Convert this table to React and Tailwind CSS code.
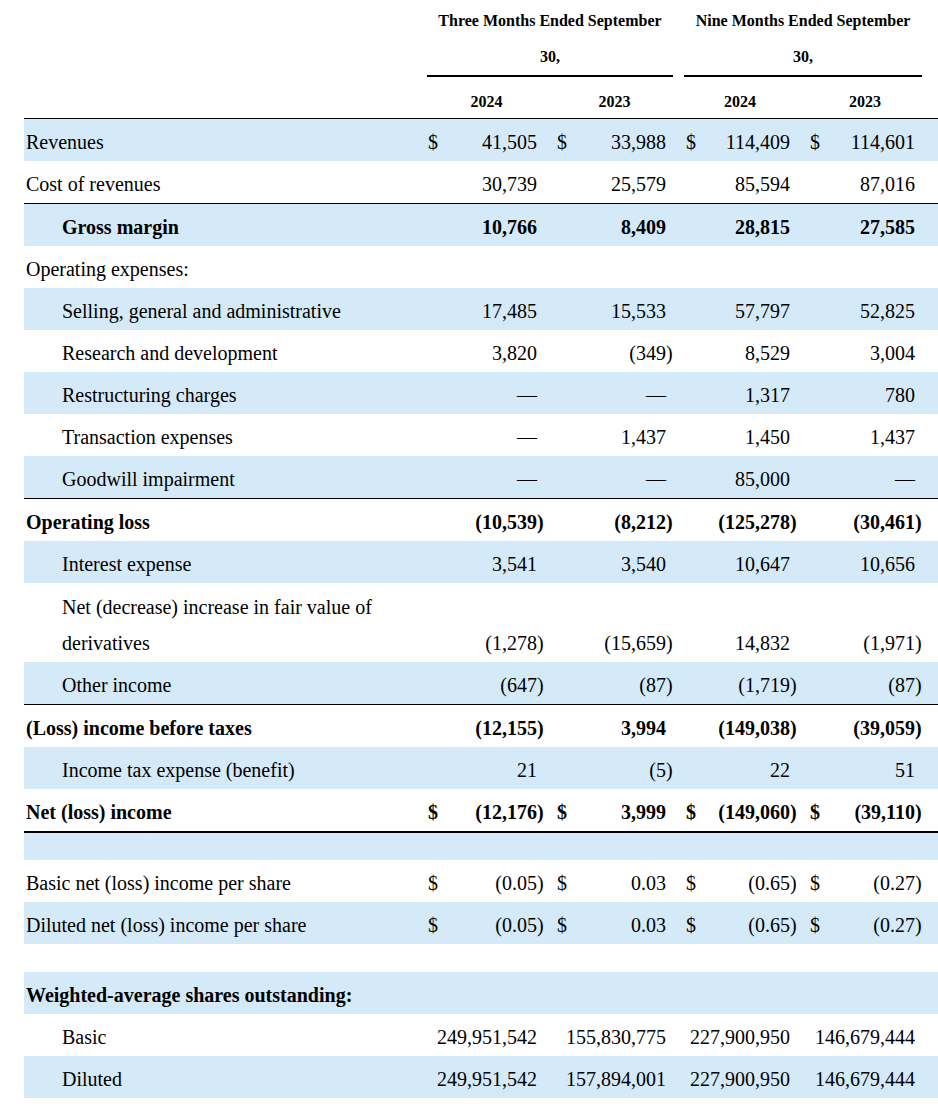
const cols = "grid grid-cols-[403px_18px_92px_19px_18px_92px_7px_11px_18px_88px_18px_18px_89px_7px]";

const rows = [
  { label: "Revenues", blue: true, dollar: true, vals: ["41,505", "33,988", "114,409", "114,601"] },
  { label: "Cost of revenues", line: "thin", vals: ["30,739", "25,579", "85,594", "87,016"] },
  { label: "Gross margin", indent: true, bold: true, blue: true, vals: ["10,766", "8,409", "28,815", "27,585"] },
  { label: "Operating expenses:", vals: ["", "", "", ""] },
  { label: "Selling, general and administrative", indent: true, blue: true, vals: ["17,485", "15,533", "57,797", "52,825"] },
  { label: "Research and development", indent: true, vals: ["3,820", "(349)", "8,529", "3,004"] },
  { label: "Restructuring charges", indent: true, blue: true, vals: ["—", "—", "1,317", "780"] },
  { label: "Transaction expenses", indent: true, vals: ["—", "1,437", "1,450", "1,437"] },
  { label: "Goodwill impairment", indent: true, blue: true, line: "thin", vals: ["—", "—", "85,000", "—"] },
  { label: "Operating loss", bold: true, vals: ["(10,539)", "(8,212)", "(125,278)", "(30,461)"] },
  { label: "Interest expense", indent: true, blue: true, vals: ["3,541", "3,540", "10,647", "10,656"] },
  { label: ["Net (decrease) increase in fair value of", "derivatives"], indent: true, tall: true, vals: ["(1,278)", "(15,659)", "14,832", "(1,971)"] },
  { label: "Other income", indent: true, blue: true, line: "thin", vals: ["(647)", "(87)", "(1,719)", "(87)"] },
  { label: "(Loss) income before taxes", bold: true, vals: ["(12,155)", "3,994", "(149,038)", "(39,059)"] },
  { label: "Income tax expense (benefit)", indent: true, blue: true, vals: ["21", "(5)", "22", "51"] },
  { label: "Net (loss) income", bold: true, dollar: true, line: "thick", vals: ["(12,176)", "3,999", "(149,060)", "(39,110)"] },
  { spacer: "h-[27px] bg-[#d4eaf8]" },
  { label: "Basic net (loss) income per share", dollar: true, vals: ["(0.05)", "0.03", "(0.65)", "(0.27)"] },
  { label: "Diluted net (loss) income per share", blue: true, dollar: true, vals: ["(0.05)", "0.03", "(0.65)", "(0.27)"] },
  { spacer: "h-[28px]" },
  { label: "Weighted-average shares outstanding:", bold: true, blue: true, vals: ["", "", "", ""] },
  { label: "Basic", indent: true, vals: ["249,951,542", "155,830,775", "227,900,950", "146,679,444"] },
  { label: "Diluted", indent: true, blue: true, vals: ["249,951,542", "157,894,001", "227,900,950", "146,679,444"] },
];

const dollarPad = ["pl-[1px]", "pl-[1px]", "pl-[2px]", "pl-[2px]"];

const Row = ({ r }) => {
  if (r.spacer) return <div className={r.spacer}></div>;
  let h = r.tall ? "h-[79px]" : "h-[42px]";
  if (r.line === "thin") h = "h-[43px] border-b border-black";
  if (r.line === "thick") h = "h-[44px] border-b-2 border-black";
  const weight = r.bold ? "font-bold" : "";
  const cells = [];
  r.vals.forEach((v, i) => {
    const neg = v.startsWith("(");
    const num = neg ? v.slice(0, -1) : v;
    cells.push(<div key={"d" + i} className={dollarPad[i]}>{r.dollar ? "$" : ""}</div>);
    cells.push(
      <div key={"n" + i} className="flex justify-end whitespace-nowrap">
        <span>{num}</span>
      </div>
    );
    cells.push(<div key={"p" + i}>{neg ? ")" : ""}</div>);
    if (i === 1) cells.push(<div key="gap"></div>);
  });
  return (
    <div className={`${cols} items-end pb-[1px] leading-[36px] ${h} ${r.blue ? "bg-[#d4eaf8]" : ""} ${weight}`}>
      <div className={r.indent ? "pl-[38px]" : "pl-[2px]"}>
        {Array.isArray(r.label) ? r.label.map((t, k) => <div key={k}>{t}</div>) : r.label}
      </div>
      {cells}
    </div>
  );
};

const App = () => {
  return (
    <div className="bg-white w-[938px] min-h-[1108px] pl-[24px] text-black text-[20px] font-['Liberation_Serif','Times_New_Roman',serif]">
      <div className={`${cols} text-[16px] font-bold leading-[37px] pt-[2px]`}>
        <div></div>
        <div className="col-span-6 text-center border-b-2 border-black">
          <div>Three Months Ended September</div>
          <div className="-mt-[1px]">30,</div>
        </div>
        <div></div>
        <div className="col-span-6 text-center border-b-2 border-black">
          <div>Nine Months Ended September</div>
          <div className="-mt-[1px]">30,</div>
        </div>
      </div>
      <div className={`${cols} text-[16px] font-bold leading-[20px] pt-[15px] pb-[6px] border-b border-black`}>
        <div></div>
        <div className="col-span-3 text-center pr-[10px]">2024</div>
        <div className="col-span-3 text-center">2023</div>
        <div></div>
        <div className="col-span-3 text-center pr-[12px]">2024</div>
        <div className="col-span-3 text-center">2023</div>
      </div>
      {rows.map((r, i) => (
        <Row key={i} r={r} />
      ))}
    </div>
  );
};

export default App;
